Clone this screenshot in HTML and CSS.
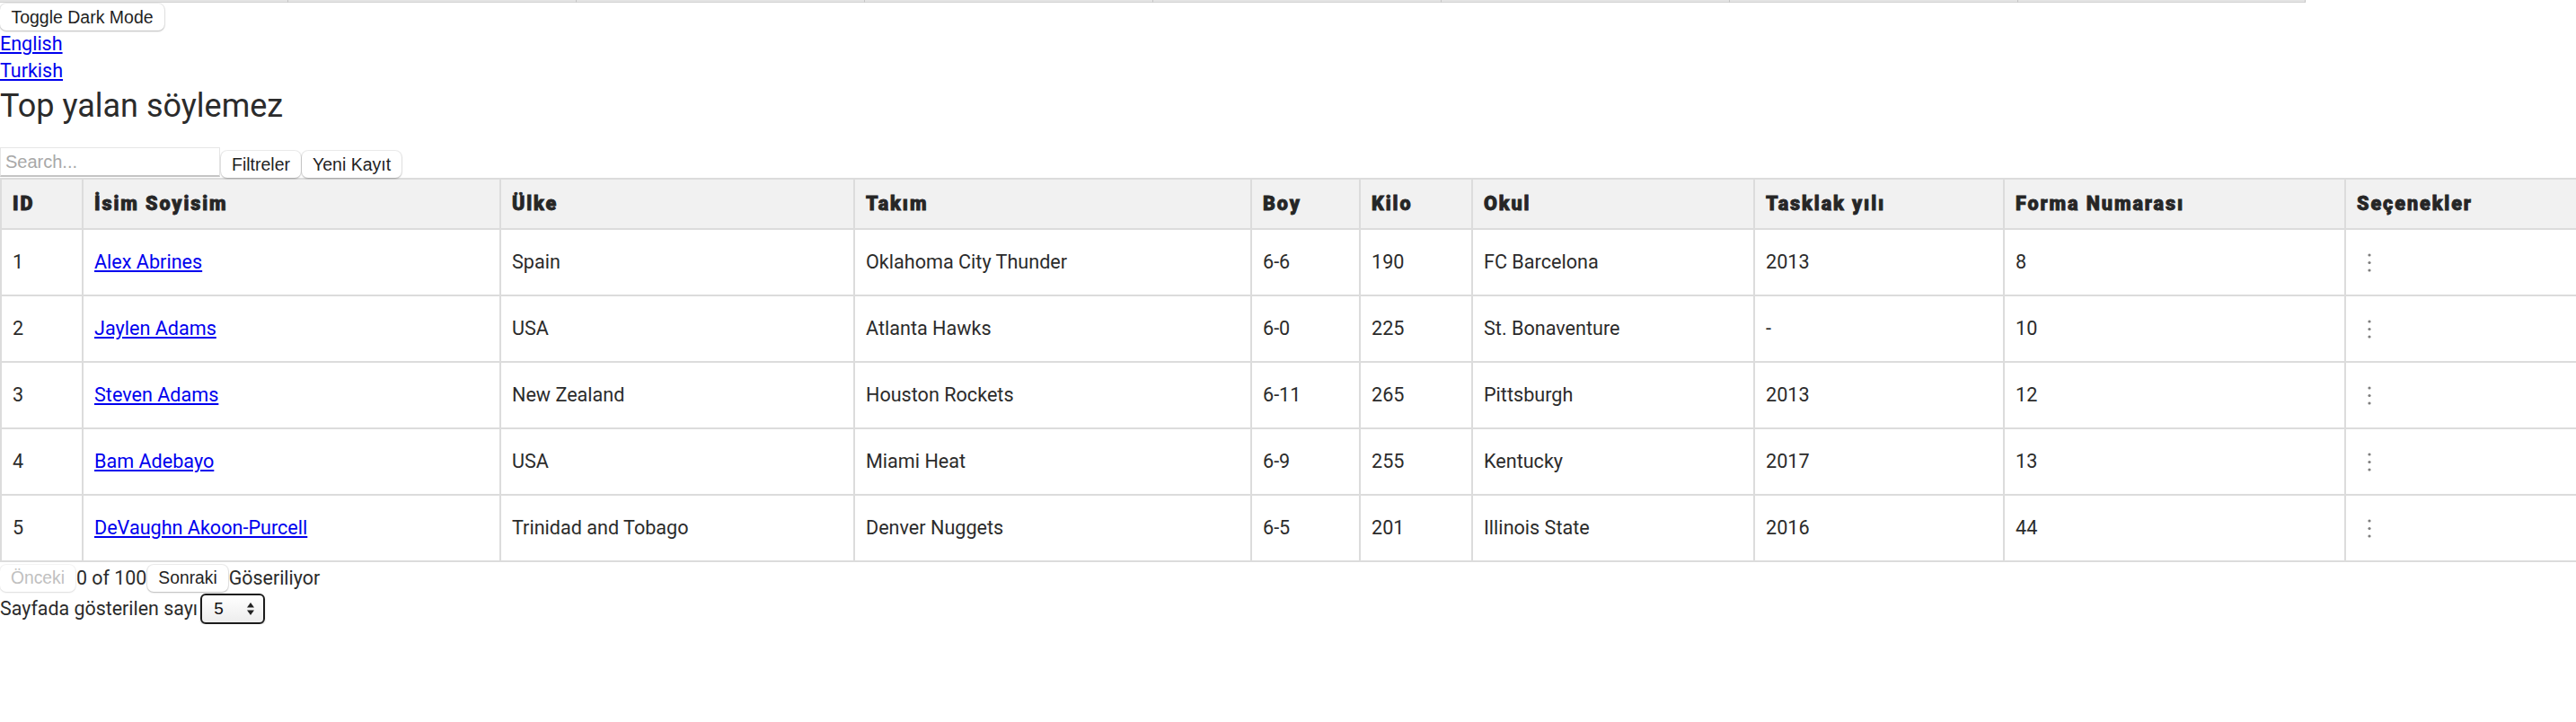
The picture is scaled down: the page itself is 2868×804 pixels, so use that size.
FILE: index.html
```html
<!DOCTYPE html>
<html lang="tr">
<head>
<meta charset="utf-8">
<title>Top yalan söylemez</title>
<link rel="stylesheet" href="styles.css">
</head>
<body>
<div class="tabstrip">
  <span class="tab"></span><span class="tab"></span><span class="tab"></span><span class="tab"></span>
  <span class="tab"></span><span class="tab"></span><span class="tab"></span><span class="tab"></span>
</div>
<button class="btn toggle">Toggle Dark Mode</button>
<div class="langs">
  <a class="lang" href="#">English</a>
  <a class="lang" href="#">Turkish</a>
</div>
<h2 class="title">Top yalan söylemez</h2>
<div class="toolbar">
  <input class="search" type="text" placeholder="Search...">
  <button class="btn">Filtreler</button>
  <button class="btn">Yeni Kayıt</button>
</div>
<table class="grid">
  <colgroup>
    <col class="c-id"><col class="c-name"><col class="c-country"><col class="c-team"><col class="c-height">
    <col class="c-weight"><col class="c-school"><col class="c-draft"><col class="c-number"><col class="c-opts">
  </colgroup>
  <thead>
    <tr>
      <th>ID</th><th>İsim Soyisim</th><th>Ülke</th><th>Takım</th><th>Boy</th>
      <th>Kilo</th><th>Okul</th><th>Tasklak yılı</th><th>Forma Numarası</th><th>Seçenekler</th>
    </tr>
  </thead>
  <tbody>
    <tr>
      <td>1</td><td><a href="#">Alex Abrines</a></td><td>Spain</td><td>Oklahoma City Thunder</td><td>6-6</td>
      <td>190</td><td>FC Barcelona</td><td>2013</td><td>8</td>
      <td><svg class="kebab" width="6" height="22" viewBox="0 0 6 22"><circle cx="3" cy="3" r="1.6"/><circle cx="3" cy="11.5" r="1.6"/><circle cx="3" cy="20" r="1.6"/></svg></td>
    </tr>
    <tr>
      <td>2</td><td><a href="#">Jaylen Adams</a></td><td>USA</td><td>Atlanta Hawks</td><td>6-0</td>
      <td>225</td><td>St. Bonaventure</td><td>-</td><td>10</td>
      <td><svg class="kebab" width="6" height="22" viewBox="0 0 6 22"><circle cx="3" cy="3" r="1.6"/><circle cx="3" cy="11.5" r="1.6"/><circle cx="3" cy="20" r="1.6"/></svg></td>
    </tr>
    <tr>
      <td>3</td><td><a href="#">Steven Adams</a></td><td>New Zealand</td><td>Houston Rockets</td><td>6-11</td>
      <td>265</td><td>Pittsburgh</td><td>2013</td><td>12</td>
      <td><svg class="kebab" width="6" height="22" viewBox="0 0 6 22"><circle cx="3" cy="3" r="1.6"/><circle cx="3" cy="11.5" r="1.6"/><circle cx="3" cy="20" r="1.6"/></svg></td>
    </tr>
    <tr>
      <td>4</td><td><a href="#">Bam Adebayo</a></td><td>USA</td><td>Miami Heat</td><td>6-9</td>
      <td>255</td><td>Kentucky</td><td>2017</td><td>13</td>
      <td><svg class="kebab" width="6" height="22" viewBox="0 0 6 22"><circle cx="3" cy="3" r="1.6"/><circle cx="3" cy="11.5" r="1.6"/><circle cx="3" cy="20" r="1.6"/></svg></td>
    </tr>
    <tr>
      <td>5</td><td><a href="#">DeVaughn Akoon-Purcell</a></td><td>Trinidad and Tobago</td><td>Denver Nuggets</td><td>6-5</td>
      <td>201</td><td>Illinois State</td><td>2016</td><td>44</td>
      <td><svg class="kebab" width="6" height="22" viewBox="0 0 6 22"><circle cx="3" cy="3" r="1.6"/><circle cx="3" cy="11.5" r="1.6"/><circle cx="3" cy="20" r="1.6"/></svg></td>
    </tr>
  </tbody>
</table>
<div class="pager">
  <button class="btn pbtn" disabled>Önceki</button>
  <span class="ptext">0 of 100</span>
  <button class="btn pbtn">Sonraki</button>
  <span class="ptext">Göseriliyor</span>
</div>
<div class="perpage">
  <span class="ptext">Sayfada gösterilen sayı</span>
  <span class="selwrap">
    <select class="sel"><option>5</option><option>10</option><option>20</option></select>
    <svg class="selarrow" width="10" height="16" viewBox="0 0 10 16"><path d="M5 1 L9 6.5 L1 6.5 Z"/><path d="M5 15 L9 9.5 L1 9.5 Z"/></svg>
  </span>
</div>
</body>
</html>
```
FILE: styles.css
```css
html, body {
  margin: 0;
  padding: 0;
  background: #fff;
}
body {
  font-family: Roboto, "Noto Sans", sans-serif;
  color: #2b2b2b;
}
.tabstrip {
  display: flex;
  height: 3px;
}
.tab {
  width: 320px;
  height: 2px;
  background: #e4e4e4;
  border-bottom: 1px solid #d2d2d2;
  border-right: 1px solid #c6c6c6;
  box-sizing: content-box;
}
.tab:last-child {
  width: 319px;
}
.btn {
  font-family: "Liberation Sans", Arial, sans-serif;
  font-size: 19.5px;
  color: #1f1f1f;
  background: #fff;
  border: none;
  border-radius: 7px;
  height: 30px;
  padding: 0 12px;
  margin: 0;
  box-shadow: 0 0 0 1px rgba(0,0,0,0.07), 0 1px 2px rgba(0,0,0,0.22);
  cursor: pointer;
}
.toggle {
  display: block;
  margin-top: 1px;
  width: 183px;
}
.langs {
  display: flex;
  flex-direction: column;
  align-items: flex-start;
}
.lang {
  font-size: 21.5px;
  line-height: 30px;
  color: #0000ee;
  text-decoration: underline;
}
.title {
  font-size: 36px;
  font-weight: 400;
  line-height: 42px;
  margin: 3px 0 25px;
  color: #2b2b2b;
}
.toolbar {
  display: flex;
  align-items: flex-end;
  gap: 1px;
  height: 34px;
}
.search {
  box-sizing: border-box;
  width: 245px;
  height: 33px;
  margin: 0 0 1px 0;
  padding: 0 5px;
  border: 1px solid #e6e6e6;
  border-bottom: 2px solid #c4c4c4;
  font-family: "Liberation Sans", Arial, sans-serif;
  font-size: 20px;
  color: #222;
  outline: none;
}
.search::placeholder {
  color: #a8a8a8;
}
.toolbar .btn {
  height: 30px;
}
.grid {
  width: 100%;
  table-layout: fixed;
  border-collapse: collapse;
  border: 2px solid #dcdcdc;
  font-size: 21.6px;
}
.c-id { width: 91px; }
.c-name { width: 465px; }
.c-country { width: 394px; }
.c-team { width: 442px; }
.c-height { width: 121px; }
.c-weight { width: 125px; }
.c-school { width: 314px; }
.c-draft { width: 278px; }
.c-number { width: 380px; }
.c-opts { width: 258px; }
.grid th, .grid td {
  border: 2px solid #dcdcdc;
  text-align: left;
  vertical-align: middle;
  padding: 0 12px;
  line-height: 24px;
  white-space: nowrap;
}
.grid th {
  background: #f1f1f1;
  font-weight: 900;
  letter-spacing: 1.9px;
  -webkit-text-stroke: 0.8px #262626;
  color: #262626;
  padding-top: 15px;
  padding-bottom: 15px;
}
.grid td {
  padding-top: 24px;
  padding-bottom: 24px;
  color: #2b2b2b;
}
.grid td a {
  color: #0000ee;
  text-decoration: underline;
}
.kebab {
  display: block;
  fill: #7e7e7e;
  margin-left: 11px;
}
.pager {
  display: flex;
  align-items: center;
  gap: 1px;
  margin-top: 3px;
  height: 30px;
}
.ptext {
  font-size: 21.4px;
  line-height: 30px;
  color: #2b2b2b;
}
.pbtn {
  font-size: 19.3px;
  padding: 0 12px;
}
.pbtn[disabled] {
  color: #c0c0c0;
  box-shadow: 0 0 0 1px rgba(0,0,0,0.04), 0 1px 2px rgba(0,0,0,0.1);
  cursor: default;
}
.perpage {
  display: flex;
  align-items: center;
  gap: 3px;
  margin-top: 1px;
  height: 35px;
}
.selwrap {
  position: relative;
  display: inline-block;
}
.sel {
  -webkit-appearance: none;
  appearance: none;
  display: block;
  box-sizing: border-box;
  width: 72px;
  height: 34px;
  border: 2px solid #1c1c1c;
  border-radius: 6px;
  background: linear-gradient(#ffffff, #ededed);
  font-family: "Liberation Sans", Arial, sans-serif;
  font-size: 19px;
  color: #111;
  padding: 0 0 0 13px;
  box-shadow: 0 1px 2px rgba(0,0,0,0.2);
  outline: none;
}
.selarrow {
  position: absolute;
  right: 11px;
  top: 9px;
  fill: #222;
  pointer-events: none;
}
```
